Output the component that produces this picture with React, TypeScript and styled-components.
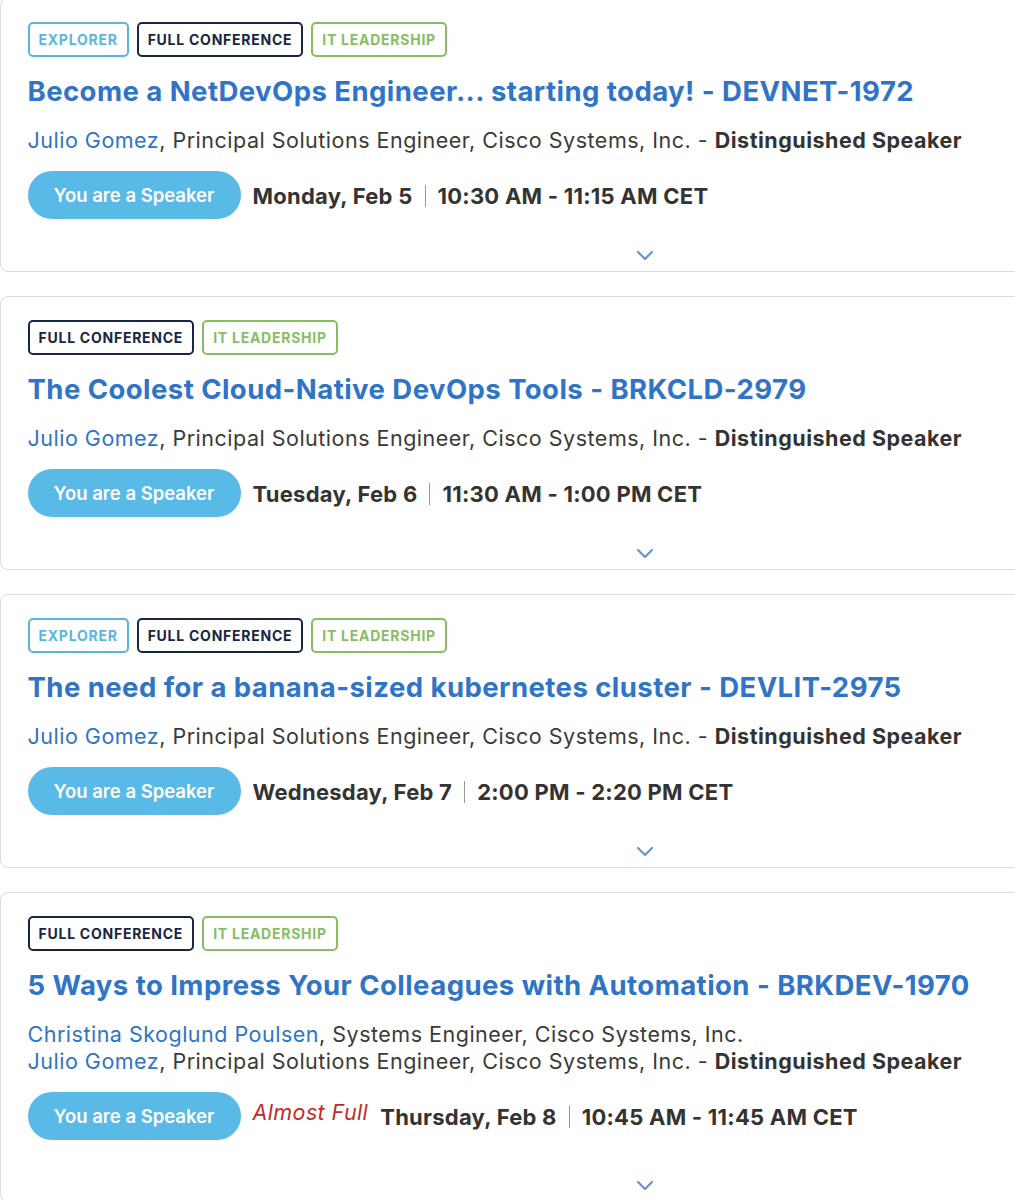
import styled, { createGlobalStyle } from 'styled-components';

const GlobalStyle = createGlobalStyle`
  html, body {
    margin: 0;
    padding: 0;
    background: #fff;
    overflow: hidden;
  }
  body {
    font-family: Inter, "Liberation Sans", sans-serif;
    color: #333;
  }
`;

const Page = styled.div`
  display: flex;
  flex-direction: column;
  gap: 24px;
  margin-top: -2px;
  margin-right: -20px;
`;

const Card = styled.div`
  border: 1.5px solid #dcdcdc;
  border-radius: 8px;
  padding: 23px 0 10px 26.5px;
  display: flex;
  flex-direction: column;
`;

const Badges = styled.div`
  display: flex;
  gap: 8px;
`;

const Badge = styled.span<{ $color: string }>`
  display: inline-flex;
  align-items: center;
  height: 35px;
  box-sizing: border-box;
  padding: 0 9px;
  border: 2.5px solid ${(p) => p.$color};
  border-radius: 5px;
  color: ${(p) => p.$color};
  font-size: 14px;
  font-weight: 700;
  letter-spacing: 0.75px;
`;

const Title = styled.div`
  margin-top: 17px;
  font-size: 27.5px;
  font-weight: 700;
  color: #2f74c6;
  line-height: 34px;
  letter-spacing: 0.45px;
`;

const Speakers = styled.div`
  margin-top: 19px;
  font-size: 21.5px;
  letter-spacing: 0.5px;
  line-height: 27px;
  color: #3a3a3a;
`;

const SpeakerName = styled.span`
  color: #2f74c6;
`;

const Role = styled.b`
  font-weight: 700;
  color: #333;
`;

const Row = styled.div<{ $spaced?: boolean }>`
  margin-top: 17px;
  margin-bottom: ${(p) => (p.$spaced ? '9px' : '0')};
  display: flex;
  align-items: center;
  gap: 12px;
`;

const SpeakerButton = styled.div`
  width: 213px;
  height: 48px;
  border-radius: 24px;
  background: #59b9e7;
  color: #fff;
  font-size: 18.5px;
  font-weight: 600;
  display: flex;
  align-items: center;
  justify-content: center;
`;

const AlmostFull = styled.span`
  font-style: italic;
  font-size: 21.5px;
  letter-spacing: 0.4px;
  color: #c42a2a;
  margin-top: -8px;
`;

const When = styled.div`
  display: flex;
  align-items: center;
  font-size: 22px;
  font-weight: 700;
  letter-spacing: 0.25px;
  color: #333;
  margin-top: 2px;
`;

const Sep = styled.span`
  width: 1px;
  height: 22px;
  background: #999;
  margin: 0 12px;
`;

const Chevron = styled.div`
  margin-top: 31px;
  align-self: flex-start;
  margin-left: 608px;
  display: flex;
`;

type Session = {
  tags: string[];
  title: string;
  speakers: { name: string; text: string; role?: string }[];
  almostFull?: boolean;
  day: string;
  time: string;
};

const tagColors: Record<string, string> = {
  EXPLORER: '#5ab6de',
  'FULL CONFERENCE': '#182543',
  'IT LEADERSHIP': '#88bd63',
};

const julio = {
  name: 'Julio Gomez',
  text: ', Principal Solutions Engineer, Cisco Systems, Inc. - ',
  role: 'Distinguished Speaker',
};

const sessions: Session[] = [
  {
    tags: ['EXPLORER', 'FULL CONFERENCE', 'IT LEADERSHIP'],
    title: 'Become a NetDevOps Engineer... starting today! - DEVNET-1972',
    speakers: [julio],
    day: 'Monday, Feb 5',
    time: '10:30 AM - 11:15 AM CET',
  },
  {
    tags: ['FULL CONFERENCE', 'IT LEADERSHIP'],
    title: 'The Coolest Cloud-Native DevOps Tools - BRKCLD-2979',
    speakers: [julio],
    day: 'Tuesday, Feb 6',
    time: '11:30 AM - 1:00 PM CET',
  },
  {
    tags: ['EXPLORER', 'FULL CONFERENCE', 'IT LEADERSHIP'],
    title: 'The need for a banana-sized kubernetes cluster - DEVLIT-2975',
    speakers: [julio],
    day: 'Wednesday, Feb 7',
    time: '2:00 PM - 2:20 PM CET',
  },
  {
    tags: ['FULL CONFERENCE', 'IT LEADERSHIP'],
    title: '5 Ways to Impress Your Colleagues with Automation - BRKDEV-1970',
    speakers: [
      { name: 'Christina Skoglund Poulsen', text: ', Systems Engineer, Cisco Systems, Inc.' },
      julio,
    ],
    almostFull: true,
    day: 'Thursday, Feb 8',
    time: '10:45 AM - 11:45 AM CET',
  },
];

export default function App() {
  return (
    <>
      <GlobalStyle />
      <Page>
        {sessions.map((s) => (
          <Card key={s.title}>
            <Badges>
              {s.tags.map((t) => (
                <Badge key={t} $color={tagColors[t]}>
                  {t}
                </Badge>
              ))}
            </Badges>
            <Title>{s.title}</Title>
            <Speakers>
              {s.speakers.map((sp) => (
                <div key={sp.name}>
                  <SpeakerName>{sp.name}</SpeakerName>
                  {sp.text}
                  {sp.role && <Role>{sp.role}</Role>}
                </div>
              ))}
            </Speakers>
            <Row $spaced={s.almostFull}>
              <SpeakerButton>You are a Speaker</SpeakerButton>
              {s.almostFull && <AlmostFull>Almost Full</AlmostFull>}
              <When>
                {s.day}
                <Sep />
                {s.time}
              </When>
            </Row>
            <Chevron>
              <svg width="18" height="11" viewBox="0 0 18 11">
                <path d="M2 2 L9 9 L16 2" fill="none" stroke="#6a93cc" strokeWidth="2.2" strokeLinecap="round" strokeLinejoin="round" />
              </svg>
            </Chevron>
          </Card>
        ))}
      </Page>
    </>
  );
}
